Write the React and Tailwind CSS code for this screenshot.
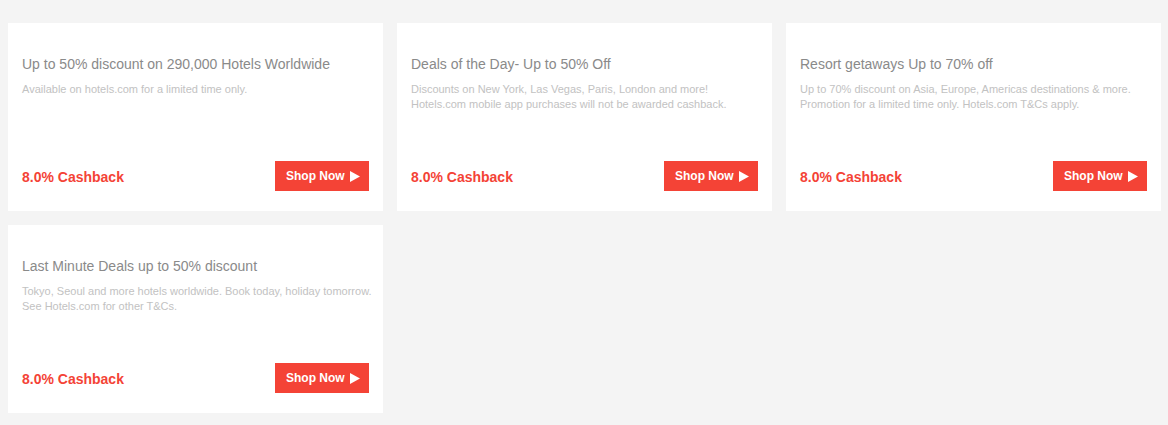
import React from 'react'

const deals = [
  {
    title: 'Up to 50% discount on 290,000 Hotels Worldwide',
    desc: 'Available on hotels.com for a limited time only.',
  },
  {
    title: 'Deals of the Day- Up to 50% Off',
    desc: 'Discounts on New York, Las Vegas, Paris, London and more! Hotels.com mobile app purchases will not be awarded cashback.',
  },
  {
    title: 'Resort getaways Up to 70% off',
    desc: 'Up to 70% discount on Asia, Europe, Americas destinations & more. Promotion for a limited time only. Hotels.com T&Cs apply.',
  },
  {
    title: 'Last Minute Deals up to 50% discount',
    desc: 'Tokyo, Seoul and more hotels worldwide. Book today, holiday tomorrow. See Hotels.com for other T&Cs.',
  },
]

const DealCard = ({ deal }) => {
  return (
    <div className="flex flex-col h-[188px] bg-white pt-[31px] px-[14px] pb-[20px]">
      <h3 className="text-[14px] leading-[20px] text-[#8a8a8a] font-normal">{deal.title}</h3>
      <p className="mt-[8px] mr-[-5px] text-[11px] leading-[15px] text-[#c2c2c2]">{deal.desc}</p>

      <div className="mt-auto flex items-center justify-between">
        <span className="pt-[2px] text-[14px] font-bold text-[#f44336]">8.0% Cashback</span>
        <button className="flex items-center h-[30px] w-[94px] pl-[11px] bg-[#f44336] text-white text-[12px] font-bold">
          Shop Now
          <svg width="10" height="11" viewBox="0 0 10 11" className="ml-[5px]">
            <polygon points="0,0 10,5.5 0,11" fill="white" />
          </svg>
        </button>
      </div>
    </div>
  )
}

export default function App() {
  return (
    <div
      className="min-h-[425px] bg-[#f4f4f4] pt-[23px] pl-[8px]"
      style={{ fontFamily: '"Liberation Sans", Arial, sans-serif' }}
    >
      <div className="grid grid-cols-[repeat(3,375px)] gap-[14px]">
        {deals.map((deal, i) => (
          <DealCard key={i} deal={deal} />
        ))}
      </div>
    </div>
  )
}
